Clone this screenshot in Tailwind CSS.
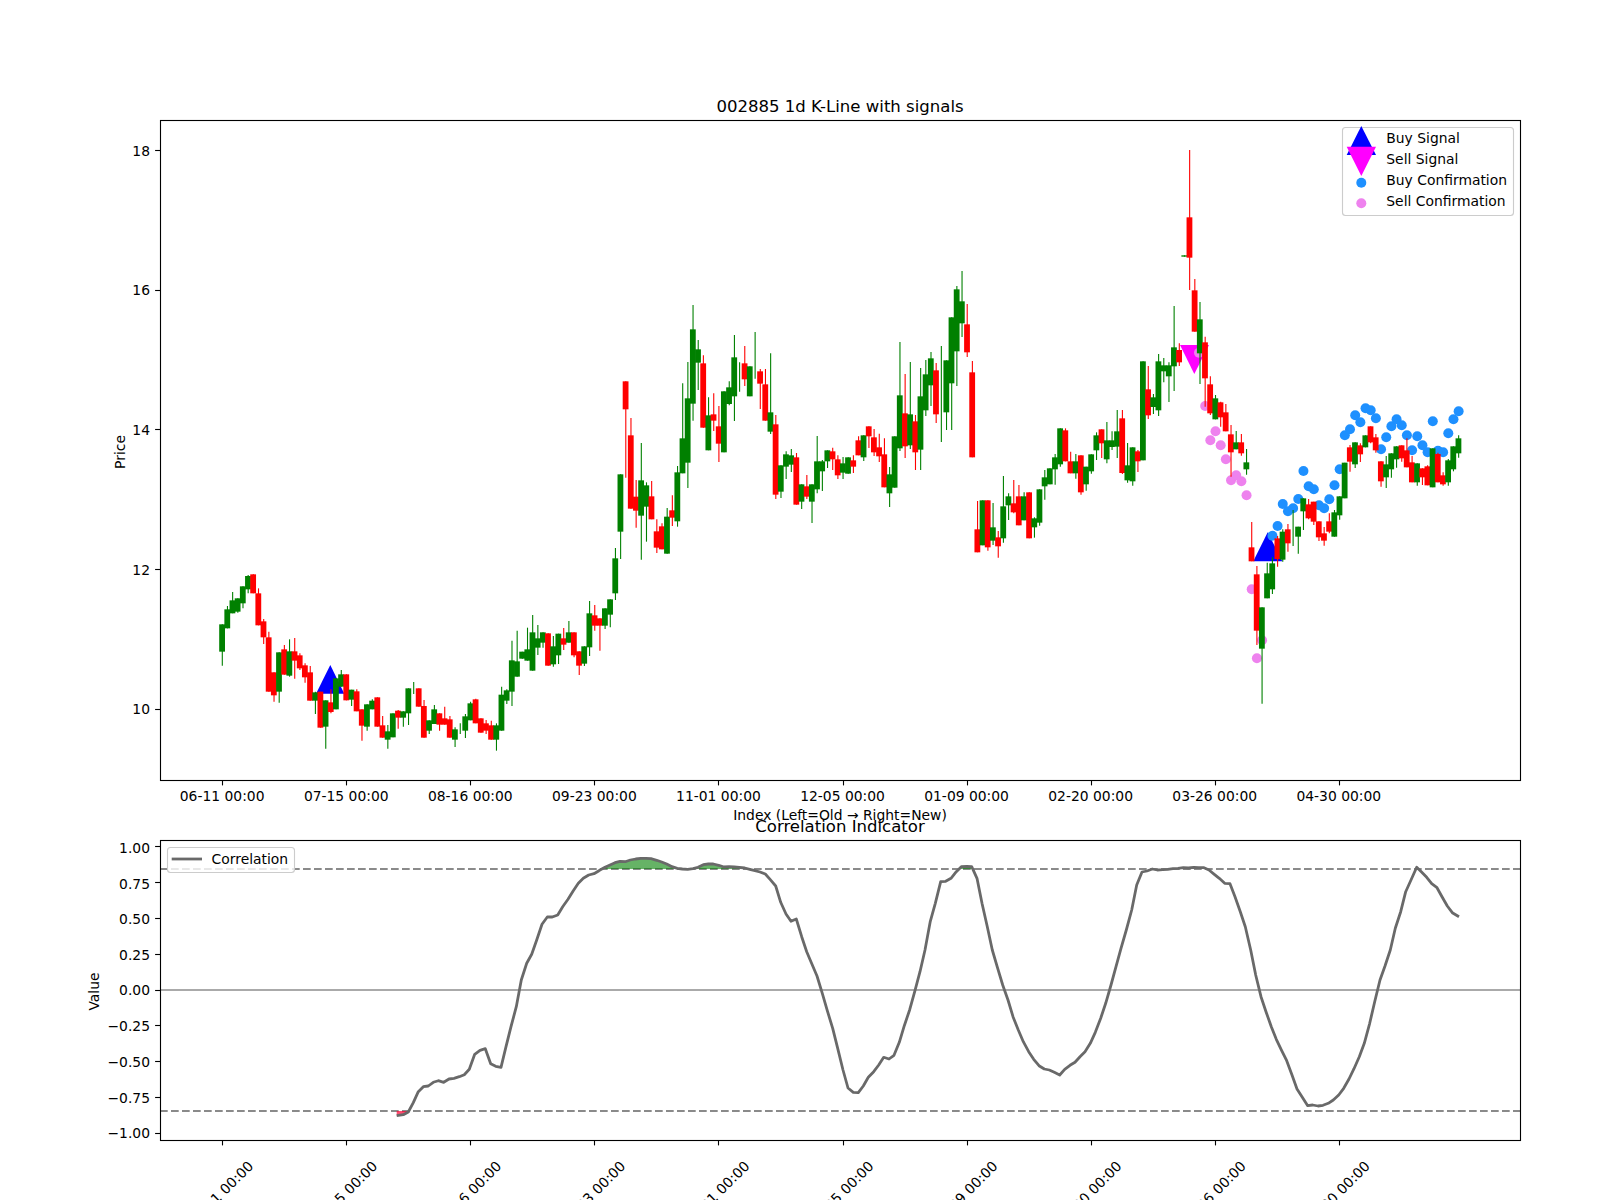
<!DOCTYPE html>
<html lang="en">
<head>
  <meta charset="UTF-8">
  <title>002885 1d K-Line with signals</title>
  <script src="https://cdn.jsdelivr.net/npm/@tailwindcss/browser@4"></script>
</head>
<body class="bg-white">
  <div class="w-[1600px] h-[1200px] overflow-hidden bg-white">
    <svg id="fig" width="1600" height="1200" viewBox="0 0 1600 1200" class="block font-['DejaVu_Sans',sans-serif] fill-black text-[13.89px]">
      <defs>
        <clipPath id="above"><rect x="160" y="840" width="1360" height="29"></rect></clipPath>
        <clipPath id="below"><rect x="160" y="1111" width="1360" height="29"></rect></clipPath>
      </defs>

      <!-- Price panel -->
      <text x="840" y="111.7" text-anchor="middle" class="text-[16.55px]">002885 1d K-Line with signals</text>
      <g id="markers"></g>
      <g id="candles"></g>
      <rect x="160.5" y="120.5" width="1360" height="660" fill="none" stroke="#000" stroke-width="1.11"></rect>
      <g id="price-ticks" stroke="#000" stroke-width="1.11"></g>
      <text x="150" y="156" text-anchor="end">18</text>
      <text x="150" y="295.1" text-anchor="end">16</text>
      <text x="150" y="434.9" text-anchor="end">14</text>
      <text x="150" y="574.7" text-anchor="end">12</text>
      <text x="150" y="714" text-anchor="end">10</text>
      <text transform="translate(124.8 452) rotate(-90)" text-anchor="middle">Price</text>
      <text x="840" y="820" text-anchor="middle">Index (Left=Old → Right=New)</text>

      <!-- Price legend -->
      <rect x="1342.5" y="127.5" width="171" height="88" rx="3" fill="#fff" fill-opacity="0.8" stroke="#ccc" stroke-width="1.11"></rect>
      <polygon points="1361.3,126 1376,155 1346.7,155" fill="#00f"></polygon>
      <polygon points="1346.7,146.7 1376,146.7 1361.3,176" fill="#f0f"></polygon>
      <circle cx="1361.3" cy="182.7" r="5" fill="#1e90ff"></circle>
      <circle cx="1361.3" cy="203.3" r="5" fill="#ee82ee"></circle>
      <text x="1386.3" y="143.3">Buy Signal</text>
      <text x="1386.3" y="164.3">Sell Signal</text>
      <text x="1386.3" y="185.3">Buy Confirmation</text>
      <text x="1386.3" y="206">Sell Confirmation</text>

      <!-- Correlation panel -->
      <text x="840" y="831.7" text-anchor="middle" class="text-[16.55px]">Correlation Indicator</text>
      <line x1="160" x2="1520" y1="869" y2="869" stroke="#8a8a8a" stroke-width="2.08" stroke-dasharray="7.7 3.3"></line>
      <line x1="160" x2="1520" y1="1111" y2="1111" stroke="#8a8a8a" stroke-width="2.08" stroke-dasharray="7.7 3.3"></line>
      <line x1="160" x2="1520" y1="990" y2="990" stroke="#aaa" stroke-width="2.08"></line>
      <path id="fill-up" fill="#008000" fill-opacity="0.6" clip-path="url(#above)"></path>
      <path id="fill-down" fill="#ff0033" fill-opacity="0.7" clip-path="url(#below)"></path>
      <path id="corr" fill="none" stroke="#696969" stroke-width="2.78" stroke-linejoin="round"></path>
      <rect x="160.5" y="840.5" width="1360" height="300" fill="none" stroke="#000" stroke-width="1.11"></rect>
      <g id="corr-ticks" stroke="#000" stroke-width="1.11"></g>
      <text x="150" y="852.8" text-anchor="end">1.00</text>
      <text x="150" y="888.6" text-anchor="end">0.75</text>
      <text x="150" y="924.4" text-anchor="end">0.50</text>
      <text x="150" y="960.2" text-anchor="end">0.25</text>
      <text x="150" y="995" text-anchor="end">0.00</text>
      <text x="150" y="1030.8" text-anchor="end">−0.25</text>
      <text x="150" y="1066.6" text-anchor="end">−0.50</text>
      <text x="150" y="1103.4" text-anchor="end">−0.75</text>
      <text x="150" y="1138.2" text-anchor="end">−1.00</text>
      <text transform="translate(98.7 991.5) rotate(-90)" text-anchor="middle">Value</text>

      <!-- Correlation legend -->
      <rect x="167.5" y="847.5" width="127" height="25" rx="3" fill="#fff" fill-opacity="0.8" stroke="#ccc" stroke-width="1.11"></rect>
      <line x1="171.7" x2="202" y1="859" y2="859" stroke="#696969" stroke-width="2.78"></line>
      <text x="211.6" y="864">Correlation</text>

      <g id="x-labels"></g>
    </svg>
  </div>

  <script>
    var NS = 'http://www.w3.org/2000/svg';
    function el(parent, name, attrs, txt) {
      var e = document.createElementNS(NS, name);
      for (var k in attrs) e.setAttribute(k, attrs[k]);
      if (txt) e.textContent = txt;
      document.getElementById(parent).appendChild(e);
    }
    function cx(i) { return 222.3 + 5.173 * i; }

    // candles: colour, body top, body bottom, wick top, wick bottom
    // values are measured per chunk on a 3x grid, y0 is the chunk's origin
    var chunks = [
      [500, [
        ['g',373,455,0,497],['g',328,385,318,0],['g',301,340,276,0],['g',295,335,0,338],['g',259,310,0,325],
        ['g',228,268,225,280],['r',223,280,0,0],['r',280,376,265,0],['r',364,412,357,432],['r',412,575,395,0],
        ['r',517,586,0,605],['g',457,575,0,608],['r',448,524,435,0],['g',454,527,418,530],['r',454,482,414,536],
        ['r',466,505,460,510],['r',496,532,490,548],['r',517,602,498,0],['g',577,602,575,642],['r',575,683,0,0],
        ['g',601,680,0,746],['r',607,636,568,640],['g',535,628,0,0],['g',523,560,510,0],['r',523,601,0,0],
        ['g',569,599,0,618],['r',574,634,568,0],['r',628,677,0,722],['g',613,680,0,692],['g',602,628,598,0],
        ['r',592,680,0,0],['r',676,713,648,0],['g',694,719,675,746],['g',640,712,0,0],['r',632,653,630,686],
        ['g',634,653,0,680],['g',565,640,0,675],['g',0,0,546,582],['r',565,620,0,0],['r',618,713,600,0],
        ['g',661,692,0,702],['g',628,672,615,0],['r',640,674,0,692],['r',655,674,620,0],['r',658,713,648,0],
        ['g',688,719,682,741],['g',0,0,670,702],['g',649,692,642,714],['g',610,661,605,0],['r',598,670,596,0],
        ['r',655,698,0,0],['r',670,692,660,702],['r',676,719,662,0],['g',676,719,670,752],['g',584,692,560,0],
        ['g',571,602,568,612],['g',481,575,422,618],['g',484,530,392,0],['g',455,476,0,0],['g',448,482,383,0],
        ['g',397,512,345,0],['g',415,443,375,465],['g',397,428,0,443],['r',400,497,0,0]
      ]],
      [520, [
        ['g',379,433,348,440],['g',341,406,0,432],['r',355,374,324,390],['g',337,368,303,0],['r',337,406,0,412],
        ['r',394,437,0,465],['g',379,431,0,438],['g',280,382,243,408],['r',286,317,255,332],['r',295,317,0,392],
        ['g',265,317,0,327],['g',238,284,0,322]
      ]],
      [270, [
        ['g',865,970,834,990],['g',613,785,0,867],['r',334,418,0,623],['r',496,716,444,0],['r',680,722,630,773],
        ['g',631,737,519,869],['g',646,710,637,815],['r',679,748,633,0],['r',784,833,748,849],['r',769,838,760,0],
        ['g',740,851,714,0],['r',721,743,676,768],['g',607,754,588,770],['g',505,610,340,0],['g',385,578,276,654],
        ['g',178,401,105,452],['g',238,278,210,360],['r',280,473,256,0],['g',436,541,382,0],['r',433,452,370,483],
        ['r',469,521,408,576],['g',364,547,0,0],['g',352,402,334,406],['g',262,379,195,453],['g',0,0,277,365],
        ['r',280,328,228,348],['g',289,379,0,0],['g',0,0,186,326],['r',304,341,297,417],['r',343,452,297,0],
        ['g',427,485,250,492],['r',463,674,435,687],['g',586,665,0,684],['g',553,590,544,627],['g',556,584,537,606],
        ['r',562,704,549,0],['g',643,695,0,717],['r',649,680,615,687],['g',643,695,0,759],['g',574,658,498,670],
        ['g',574,604,570,663],['g',541,574,0,594],['r',544,568,533,600],['r',568,616,556,627],['g',580,608,561,627],
        ['g',562,611,0,0],['r',571,590,556,609],['r',511,556,499,0],['g',496,562,0,573],['r',469,499,0,534],
        ['r',502,547,477,558],['r',532,559,491,576],['r',553,652,505,0],['g',613,670,591,711],['g',499,653,0,0],
        ['g',376,535,216,543],['r',430,529,312,564],['g',433,526,276,537],['r',454,547,435,600],['g',379,539,294,600],
        ['g',313,421,270,438],['g',265,346,246,408],['r',301,433,279,459],['g',0,0,228,516],['g',271,427,0,480],
        ['g',142,340,0,480],['g',58,244,48,348],['g',94,160,3,201],['r',163,247,102,261],['r',307,562,273,0]
      ]],
      [130, [
        ['r',1198,1267,1113,0],['g',1111,1246,0,0],['r',1111,1252,0,1262],['g',1192,1232,1119,1245],['r',1222,1249,1203,1283],
        ['g',1129,1225,1038,1238],['g',1099,1126,1090,1170],['r',1120,1147,1050,1150],['r',1099,1186,1065,0],['g',1099,1171,1087,0],
        ['r',1087,1225,0,0],['g',1165,1192,1162,1223],['g',1078,1178,0,1187],['g',1042,1069,1020,1109],['g',1015,1063,0,0],
        ['g',982,1018,972,1064],['g',895,1003,0,1010],['r',901,994,895,0],['r',994,1030,965,0],['g',994,1030,972,1046],
        ['r',976,1087,0,1094],['g',1010,1063,0,1082],['g',973,1024,0,1031],['g',916,961,907,990],['r',898,940,0,984],
        ['g',931,988,876,1000],['g',931,951,904,960],['g',904,950,840,984],['r',865,1029,840,1032],['g',1006,1051,939,1058],
        ['g',952,1054,0,1067],['r',964,994,960,1026],['g',694,991,0,0],['r',778,856,708,867],['g',802,831,792,852],
        ['g',694,841,672,858],['g',706,724,684,757],['g',706,739,697,816],['g',652,709,528,783],['r',660,697,640,708],
        ['g',376,380,0,0],['r',262,383,60,480],['r',481,605,447,0],['g',568,670,516,762],['r',637,745,620,830],
        ['r',763,850,739,855],['g',805,868,795,0],['r',817,862,815,890],['r',847,904,822,0],['r',913,967,885,1040],
        ['g',937,958,903,0],['r',937,970,912,977],['g',997,1018,957,1034]
      ]],
      [380, [
        ['r',502,544,426,0],['r',583,752,558,795],['g',682,806,0,971],['g',580,655,548,0],['g',550,628,532,642],
        ['r',475,537,468,560],['g',455,539,448,545],['r',448,490,432,515],['g',0,0,390,498],['g',440,470,0,521],
        ['g',355,394,0,450],['r',373,415,357,418],['r',365,425,0,435],['r',424,472,0,483],['r',460,482,441,497],
        ['r',424,455,400,460],['g',397,470,390,0],['g',349,406,0,419],['g',248,355,0,0],['r',202,245,195,275],
        ['g',187,253,0,264],['r',196,223,190,246],['g',166,202,0,0],['r',139,187,0,190],['r',172,211,162,218],
        ['r',244,304,0,320],['g',253,292,228,324],['g',220,268,0,293],['g',199,238,0,263],['r',196,235,0,245],
        ['r',211,262,175,0],['r',247,307,228,0],['g',250,307,0,317],['r',265,292,0,315],['r',259,316,256,0],
        ['g',205,322,0,0],['r',222,307,218,0],['r',286,313,277,317],['g',241,307,237,317],['g',199,268,0,274],
        ['g',175,220,166,233]
      ]]
    ];

    var i = 0;
    chunks.forEach(function (chunk) {
      var y0 = chunk[0];
      chunk[1].forEach(function (c) {
        var color = c[0] == 'g' ? '#008000' : '#ff0000';
        var top = c[3] || c[1], bot = c[4] || c[2];
        el('candles', 'line', { x1: cx(i), x2: cx(i), y1: y0 + top / 3, y2: y0 + bot / 3, stroke: color, 'stroke-width': 1.1 });
        if (c[2] > c[1]) {
          el('candles', 'rect', { x: cx(i) - 3.1, y: y0 + c[1] / 3, width: 5.8, height: (c[2] - c[1]) / 3, fill: color });
        }
        i++;
      });
    });

    // signal triangles, under the confirmations and the candles
    el('markers', 'polygon', { points: '330.3,665 344.3,693.7 316,693.7', fill: '#00f' });
    el('markers', 'polygon', { points: '1267.7,532.3 1282.3,561.3 1253.3,561.3', fill: '#00f' });
    el('markers', 'polygon', { points: '1180,345 1209,345 1194.3,374', fill: '#f0f' });

    // confirmations: index, y on the 3x grid
    var pink = [[190,78],[191,181],[192,154],[193,196],[194,238],[195,301],[196,286],[197,304],[198,346],[199,628],[200,835],[201,781]];
    el('markers', 'circle', { cx: 1199, cy: 352.7, r: 5, fill: '#ee82ee' });
    pink.forEach(function (d) {
      el('markers', 'circle', { cx: cx(d[0]), cy: 380 + d[1] / 3, r: 5, fill: '#ee82ee' });
    });
    var blue = [467,438,372,394,385,357,273,319,328,376,385,358,316,268,166,148,106,127,85,91,115,208,172,139,118,136,166,211,169,196,217,124,212,217,160,118,94];
    blue.forEach(function (y, n) {
      el('markers', 'circle', { cx: cx(203 + n), cy: 380 + y / 3, r: 5, fill: '#1e90ff' });
    });

    // ticks, snapped to pixel centres
    var labels = ['06-11 00:00','07-15 00:00','08-16 00:00','09-23 00:00','11-01 00:00','12-05 00:00','01-09 00:00','02-20 00:00','03-26 00:00','04-30 00:00'];
    labels.forEach(function (t, n) {
      var x = 222.67 + 124.07 * n;
      var tx = Math.floor(x) + 0.5;
      el('price-ticks', 'line', { x1: tx, x2: tx, y1: 780, y2: 785.4 });
      el('corr-ticks', 'line', { x1: tx, x2: tx, y1: 1140, y2: 1145.4 });
      el('fig', 'text', { x: x - 0.5, y: 800.7, 'text-anchor': 'middle' }, t);
      el('x-labels', 'text', { transform: 'translate(' + (x + 1.5) + ' 1197) rotate(-45)', 'text-anchor': 'middle' }, t);
    });
    for (var p = 0; p < 5; p++) {
      var y = Math.floor(150.3 + 139.8 * p) + 0.5;
      el('price-ticks', 'line', { x1: 155.1, x2: 160, y1: y, y2: y });
    }
    for (var v = 0; v < 9; v++) {
      var yv = Math.floor(846.8 + 35.8 * v) + 0.5;
      el('corr-ticks', 'line', { x1: 155.1, x2: 160, y1: yv, y2: yv });
    }

    // correlation line, traced in three runs on the 3x grid
    var runs = [
      [150, [740,1007,760,1004,775,996,790,968,805,935,820,920,835,918,850,907,865,902,881,907,897,897,912,895,928,890,943,884,958,868,974,823,990,811,1006,806,1022,851,1037,859,1053,862,1068,800,1083,740,1099,680,1114,600,1130,550,1145,523,1160,480,1176,433,1192,411,1207,411,1223,405,1238,380,1254,358,1270,332,1285,310,1300,295,1316,285,1332,281]],
      [600, [-3,272,0,270,15,262,30,255,45,248,60,244,76,245,91,240,107,237,122,235,138,235,153,236,170,241,185,246,200,252,216,260,232,265,247,267,263,268,279,266,294,262,310,254,325,252,340,252,356,256,372,261,387,260,403,261,418,262,434,264,449,268,465,272,480,276,496,282,511,299,527,318,542,367,558,402,573,424,589,417,605,470,620,515,636,553,651,588,667,640,682,692,698,745,713,805,729,870,744,924,760,937,775,938,790,918,805,892,821,875,836,855,851,832,867,837,882,826,898,787,913,737,929,689,944,635,960,575,975,510,991,424,1006,370,1022,305,1037,304,1053,295,1069,275,1084,260,1100,259,1115,260,1131,295,1146,370,1162,440,1177,510,1193,565,1208,615,1224,660,1239,710,1255,750,1270,785,1286,815,1301,838,1317,857,1333,867,1348,870,1363,877,1379,885,1394,868,1410,856,1425,847]],
      [1080, [0,830,15,815,31,790,46,757,62,715,77,670,93,615,108,560,123,505,139,450,155,390,170,315,186,276,201,273,217,267,232,270,248,269,263,268,279,266,294,265,310,263,325,264,341,262,356,263,372,263,387,270,403,283,418,295,434,310,450,311,465,350,481,395,496,440,512,510,527,585,543,650,558,695,574,740,589,778,605,812,620,842,636,885,651,927,667,952,683,977,698,975,714,978,729,976,745,970,760,960,776,945,791,925,807,897,822,866,838,830,853,790,869,730,884,665,900,600,915,558,931,510,946,445,962,395,977,335,993,300,1010,262,1024,275,1040,292,1055,311,1071,323,1086,350,1102,378,1117,398,1137,410]]
    ];
    var pts = [];
    runs.forEach(function (run) {
      for (var k = 0; k < run[1].length; k += 2) {
        pts.push((run[0] + run[1][k] / 3).toFixed(1) + ' ' + (780 + run[1][k + 1] / 3).toFixed(1));
      }
    });
    var d = 'M' + pts.join('L');
    document.getElementById('corr').setAttribute('d', d);
    document.getElementById('fill-up').setAttribute('d', d + 'L1459 869L396.7 869Z');
    document.getElementById('fill-down').setAttribute('d', d + 'L1459 1111L396.7 1111Z');
  </script>
</body>
</html>
